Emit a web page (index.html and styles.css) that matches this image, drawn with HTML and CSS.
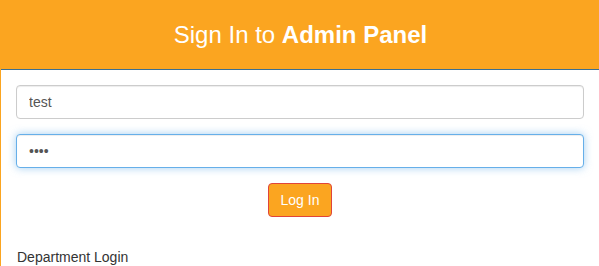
FILE: index.html
```html
<!DOCTYPE html>
<html lang="en">
<head>
  <meta charset="UTF-8" />
  <title>Admin Panel - Sign In</title>
  <link rel="stylesheet" href="styles.css">
</head>
<body>

  <div class="panel">
    <div class="panel-heading">
      <h1>Sign In to <b>Admin Panel</b></h1>
    </div>
    <div class="panel-body">
      <form class="login-form">
        <input type="text" class="form-control" value="test" />
        <input type="password" class="form-control" value="test" autofocus />
        <div class="actions">
          <button type="button" class="btn-login">Log In</button>
        </div>
      </form>
      <div class="dept-link">Department Login</div>
    </div>
  </div>

</body>
</html>
```

FILE: styles.css
```css
* {
  margin: 0;
  padding: 0;
  box-sizing: border-box;
}

body {
  font-family: 'Liberation Sans', Arial, Helvetica, sans-serif;
  font-size: 14px;
  line-height: 1.42857;
  color: #333;
  background: #fff;
}

.panel {
  border-left: 1px solid #fba520;
  width: 600px;
}

.panel-heading {
  background-color: #fba520;
  height: 70px;
  border-bottom: 1px solid #3b6f92;
  display: flex;
  align-items: center;
  justify-content: center;
}

.panel-heading h1 {
  font-size: 24px;
  font-weight: normal;
  color: #fff;
  margin-top: 1px;
}

.panel-body {
  padding: 15px 16px 15px 15px;
}

.login-form {
  display: flex;
  flex-direction: column;
  gap: 15px;
}

.form-control {
  display: block;
  width: 100%;
  height: 34px;
  padding: 6px 12px;
  font-family: inherit;
  font-size: 14px;
  color: #555;
  background: #fff;
  border: 1px solid #ccc;
  border-radius: 4px;
  box-shadow: inset 0 1px 1px rgba(0, 0, 0, 0.075);
  outline: none;
}

.form-control:focus {
  border-color: #66afe9;
  box-shadow: inset 0 1px 1px rgba(0, 0, 0, 0.075), 0 0 8px rgba(102, 175, 233, 0.6);
}

.actions {
  display: flex;
  justify-content: center;
}

.btn-login {
  font-family: inherit;
  font-size: 14px;
  line-height: 20px;
  padding: 6px 12px;
  color: #fff;
  background-color: #fba520;
  border: 1px solid #e0453a;
  border-radius: 4px;
  cursor: pointer;
}

.dept-link {
  margin-top: 31px;
  margin-left: 1px;
}
```
